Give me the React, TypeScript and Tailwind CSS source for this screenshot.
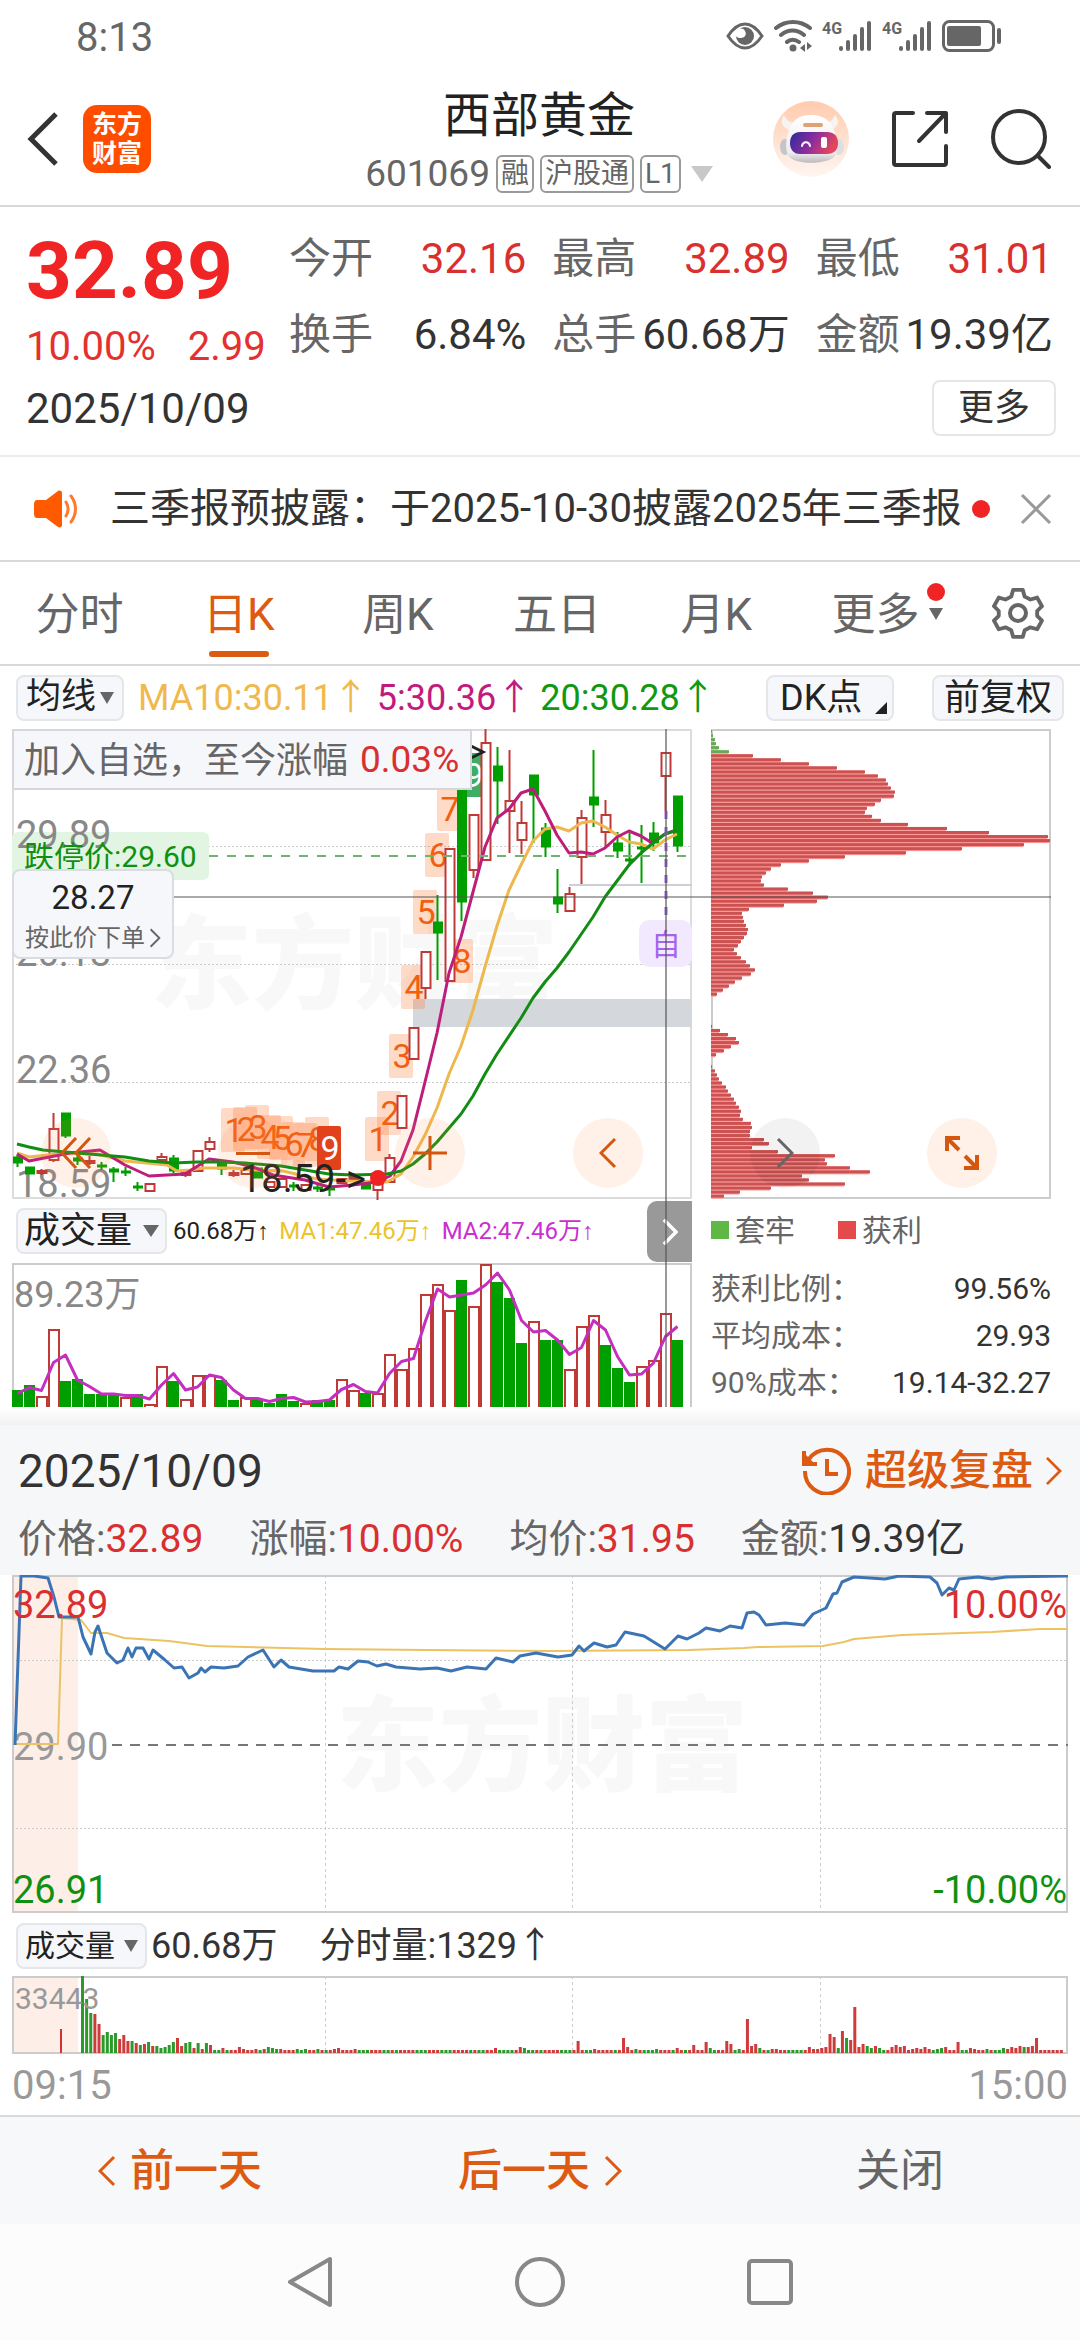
import React, { useState } from "react";

const RED = "#d92f2f";
const GREEN = "#009f00";

interface Candle {
  up: boolean;
  top: number;
  bottom: number;
  high?: number;
  low?: number;
}

// [up, body top, body bottom, high, low] in chart units
const candleRows: [number, number, number, number?, number?][] = [
  [0, 428, 434, 426, 438],
  [0, 438, 445],
  [1, 442, 444, 440, 446],
  [1, 400, 431, 384, 433],
  [0, 384, 407, 384, 409],
  [0, 429, 432, 424, 436],
  [1, 432, 434, 427, 436],
  [0, 436, 438, 433, 441],
  [0, 440, 443, 438, 453],
  [0, 442, 444, 438, 447],
  [0, 457, 459, 453, 462],
  [1, 455, 462],
  [1, 428, 431, 424, 437],
  [0, 429, 442, 426, 444],
  [1, 444, 446, 440, 448],
  [1, 422, 442, 421, 443],
  [1, 413, 420, 408, 423],
  [0, 434, 440, 432, 446],
  [1, 444, 446, 441, 448],
  [1, 441, 445],
  [0, 439, 449],
  [1, 453, 458],
  [1, 450, 458],
  [0, 456, 458, 453, 462],
  [1, 456, 461],
  [0, 458, 460, 455, 463],
  [0, 459, 461, 457, 467],
  [1, 450, 454],
  [1, 448, 450, 444, 453],
  [0, 452, 460],
  [1, 454, 461, 450, 471],
  [1, 429, 453, 425, 453],
  [1, 367, 399],
  [1, 299, 330],
  [1, 223, 259, 223, 270],
  [0, 193, 204, 166, 251],
  [1, 120, 252],
  [0, 40, 173, 40, 192],
  [1, 86, 141, 86, 149],
  [1, 14, 131, 0, 132],
  [0, 37, 52, 18, 95],
  [1, 72, 82, 21, 124],
  [1, 94, 111, 72, 125],
  [0, 46, 66, 46, 114],
  [0, 99, 118, 94, 128],
  [0, 168, 175, 140, 184],
  [1, 165, 182, 158, 182],
  [1, 89, 128, 81, 155],
  [0, 68, 76, 21, 98],
  [1, 86, 103, 71, 119],
  [0, 114, 122, 103, 129],
  [0, 130, 132, 104, 137],
  [0, 118, 120, 96, 154],
  [0, 104, 114, 93, 122],
  [1, 24, 47, 24, 82],
  [0, 67, 117, 67, 123],
];

const candles: Candle[] = candleRows.map(([up, top, bottom, high, low]) => ({
  up: up === 1,
  top,
  bottom,
  high,
  low,
}));

const volumes = [
  17, 22, 11, 78, 26, 28, 13, 13, 13, 10, 13, 3, 41, 26, 8, 32, 32, 27, 7, 10,
  7, 4, 13, 6, 4, 7, 7, 28, 17, 14, 14, 53, 38, 59, 113, 123, 97, 127, 101, 143,
  125, 109, 64, 86, 67, 67, 38, 81, 92, 62, 39, 25, 41, 47, 94, 67,
];

const volumeUp = [2, 3, 9, 11, 12, 14, 15, 16, 19, 24, 27, 28, 30, 31, 32, 33, 34, 35, 36, 38, 39, 43, 46, 47, 48, 52, 53, 54];

const ma20 =
  "5,415 17,418 31,421 65,424 113,428 137,432 161,434 185,433 209,433 233,434 269,437 293,441 317,445 341,446 375,445 389,442 401,435 413,425 425,413 437,399 449,385 461,367 473,345 485,325 509,289 521,269 533,253 545,239 557,223 581,188 593,168 605,152 617,136 629,124 641,114 653,105 665,101";
const ma10 =
  "5,424 17,428 55,424 85,425 113,432 155,436 165,442 178,441 191,439 221,439 241,441 271,442 305,450 338,452 375,453 389,445 401,428 413,406 425,379 437,345 449,317 461,281 473,238 485,197 497,161 509,136 521,112 533,100 545,98 557,102 569,94 581,92 593,98 605,106 617,113 629,115 641,120 653,111 665,105";
const ma5 =
  "5,425 17,432 58,424 88,421 113,436 137,447 173,445 197,430 221,433 241,438 261,446 293,451 317,458 341,456 365,453 378,447 389,432 401,401 413,353 425,304 437,244 449,208 461,163 473,118 485,89 497,80 509,64 521,60 533,82 545,106 557,124 569,123 581,125 593,119 605,108 617,102 629,107 640,114 653,105 665,101";

const countdown = [
  { n: "1", x: 209, y: 379 },
  { n: "2", x: 221, y: 378 },
  { n: "3", x: 233, y: 376 },
  { n: "4", x: 245, y: 386 },
  { n: "5", x: 257, y: 387 },
  { n: "6", x: 269, y: 393 },
  { n: "7", x: 281, y: 394 },
  { n: "8", x: 293, y: 388 },
  { n: "9", x: 305, y: 397, fill: "#e2421b" },
  { n: "1", x: 353, y: 388 },
  { n: "2", x: 365, y: 362 },
  { n: "3", x: 377, y: 305 },
  { n: "4", x: 389, y: 236 },
  { n: "5", x: 401, y: 161 },
  { n: "6", x: 413, y: 104 },
  { n: "7", x: 425, y: 58 },
  { n: "8", x: 437, y: 210 },
  { n: "9", x: 449, y: 24, fill: "#3fae64" },
];

const chips = [
  1, 2, 4, 5, 8, 18, 42, 70, 98, 126, 154, 167, 175, 177, 180, 184, 183, 170,
  164, 156, 154, 161, 170, 197, 236, 278, 337, 339, 313, 251, 195, 134, 98, 70,
  60, 55, 51, 50, 53, 77, 102, 117, 106, 73, 38, 31, 32, 33, 35, 37, 36, 33, 30,
  27, 23, 26, 30, 35, 39, 44, 40, 31, 24, 18, 12, 6, 0, 0, 0, 0, 0, 0, 0, 1, 9,
  17, 25, 28, 20, 13, 5, 0, 0, 1, 4, 6, 8, 11, 15, 17, 20, 23, 25, 28, 30, 29,
  32, 40, 41, 39, 39, 53, 58, 41, 67, 124, 114, 116, 139, 159, 91, 98, 134, 60,
  29, 13,
];

const pricePath =
  "3,170 9,1 22,1 36,3 42,22 47,42 66,42 71,62 79,79 83,57 86,51 95,78 105,88 111,85 116,73 120,82 124,73 131,73 137,84 141,75 153,85 162,93 170,92 177,103 186,98 189,93 193,97 199,92 212,93 226,91 236,82 251,75 262,92 269,85 277,92 301,96 322,96 327,92 336,94 346,86 356,87 365,91 374,89 384,92 408,94 425,93 439,96 455,92 474,94 484,83 501,87 508,81 524,78 546,82 560,80 567,71 572,76 582,68 595,72 604,70 613,57 632,61 653,74 666,61 675,64 687,58 694,53 708,56 718,51 730,53 735,38 742,37 747,40 754,50 773,48 792,50 801,39 814,33 821,19 825,18 830,7 842,2 873,4 887,1 918,2 925,8 930,20 937,13 942,15 947,4 966,2 980,4 994,2 1056,1";
const avgPath =
  "3,169 46,169 50,43 69,45 79,58 95,58 112,63 157,66 195,71 312,74 415,75 539,76 677,75 732,73 746,72 811,71 832,67 842,64 890,60 980,57 1028,54 1056,54";

// minute volumes, negative = falling minute
const opening = [
  -77, -54, -40, 39, 29, -18, -21, -18, -20, 14, 18, 12, -12, 10, -8, 9, -11, 7,
  -7, -5, -6, -8, -11, 15, 7, -10, -11, 5, -10, 4, -10, 8, -3, -3, 5, -3, 3, 3,
  6, 4, 3, 3, 4, -3, 4, -6, -5, -4, 4, 3,
];
const spikes: Record<number, number> = {
  52: -4, 54: -4, 57: -4, 61: 4, 62: 5, 66: 4, 100: 5, 106: 6, 107: -5, 120: 12,
  124: 4, 131: 15, 132: 6, 134: -4, 139: -4, 144: 5, 148: 8, 151: 11, 152: -5,
  156: 12, 157: 9, 159: -4, 161: 34, 162: 7, 163: 9, 164: -5, 167: 4, 168: 4,
  176: 6, 177: 4, 178: 4, 179: 5, 180: 6, 181: 19, 182: 16, 183: -5, 184: 22,
  185: -15, 186: 13, 187: 46, 188: 6, 189: 9, 190: -7, 191: -5, 192: 7, 193: -5,
  196: 6, 197: 8, 198: 6, 199: 7, 201: 4, 202: 5, 203: 4, 204: 6, 205: 4,
  207: -4, 208: -5, 209: 6, 212: 11, 215: 5, 216: 4, 219: -4, 223: -5, 224: 4,
  225: 6, 226: 5, 227: 7, 228: -6, 229: 6, 230: 7, 231: 15,
};
const minutes = Array.from({ length: 238 }, (_, i) => {
  if (i < opening.length) return opening[i];
  if (spikes[i]) return spikes[i];
  return i > 228 || i % 5 === 0 || i % 7 < 3 ? 3 : -3;
});

const quotes = [
  { label: "今开", value: "32.16", red: true },
  { label: "最高", value: "32.89", red: true },
  { label: "最低", value: "31.01", red: true },
  { label: "换手", value: "6.84%" },
  { label: "总手", value: "60.68万" },
  { label: "金额", value: "19.39亿" },
];

const tabs = ["分时", "日K", "周K", "五日", "月K"];

const Chevron = ({
  dir,
  className,
  width = 3,
}: {
  dir: "left" | "right";
  className?: string;
  width?: number;
}) => (
  <svg viewBox="0 0 18 32" className={className} fill="none" stroke="currentColor" strokeWidth={width}>
    <path d={dir === "left" ? "M16 2 2 16l14 14" : "M2 2l14 14L2 30"} />
  </svg>
);

const Caret = ({ className = "h-3 w-4" }: { className?: string }) => (
  <svg viewBox="0 0 16 12" className={className} fill="#666" preserveAspectRatio="none">
    <path d="M0 0h16L8 12z" />
  </svg>
);

const Signal = () => (
  <svg viewBox="0 0 50 32" className="h-8 w-[50px]">
    <text x="0" y="14" fontSize="16" fontWeight="700" fill="#666">
      4G
    </text>
    <g stroke="#666" strokeWidth="4" strokeLinecap="round">
      <path d="M19 28v1M26 22v7M33 16v13M40 9v20M47 3v26" />
    </g>
  </svg>
);

const StatusBar = () => (
  <div className="flex h-[72px] items-center justify-between pr-[78px] pl-[76px] text-[#666]">
    <span className="pt-1 text-[40px] leading-none">8:13</span>
    <div className="flex items-center gap-[10px]">
      <svg viewBox="0 0 38 28" className="h-7 w-[38px]" fill="none">
        <path d="M2 14C8 5 13 2 19 2s11 3 17 12C30 23 25 26 19 26S8 23 2 14z" stroke="#666" strokeWidth="3" />
        <circle cx="19" cy="14" r="9" fill="#666" />
        <path d="M11 8c3-2 6-2 8 1s0 7-4 7-6-2-6-4z" fill="#fff" />
      </svg>
      <svg viewBox="0 0 38 32" className="h-8 w-[38px]" fill="none" stroke="#666" strokeWidth="4" strokeLinecap="round">
        <path d="M2 8c10-8 24-8 34 0M7 15c7-6 16-6 23 0M13 22c3-3 8-3 12 0" />
        <circle cx="19" cy="28" r="3.5" fill="#666" stroke="none" />
        <path d="M31 24v8l-5-4zM33 22v8l5-4z" fill="#666" stroke="none" />
      </svg>
      <Signal />
      <Signal />
      <svg viewBox="0 0 60 32" className="h-8 w-[60px]" fill="none">
        <rect x="1.5" y="1.5" width="50" height="29" rx="6" stroke="#666" strokeWidth="3" />
        <rect x="5" y="6" width="34" height="20" rx="2" fill="#666" />
        <rect x="55" y="8" width="4" height="16" rx="2" fill="#666" />
      </svg>
    </div>
  </div>
);

const Robot = () => (
  <svg viewBox="0 0 76 76" className="h-[76px] w-[76px]">
    <defs>
      <linearGradient id="robotBg" x1="0" y1="0" x2="0" y2="1">
        <stop offset="0" stopColor="#ffcbae" />
        <stop offset="1" stopColor="#fff6f1" />
      </linearGradient>
      <linearGradient id="robotFace" x1="0" y1="0" x2="1" y2="0.3">
        <stop offset="0" stopColor="#2b2b9b" />
        <stop offset="0.55" stopColor="#8d2d9e" />
        <stop offset="1" stopColor="#e2465c" />
      </linearGradient>
      <linearGradient id="robotHead" x1="0" y1="0" x2="0" y2="1">
        <stop offset="0" stopColor="#ffffff" />
        <stop offset="0.8" stopColor="#ececee" />
        <stop offset="1" stopColor="#b9b9bf" />
      </linearGradient>
    </defs>
    <circle cx="38" cy="38" r="38" fill="url(#robotBg)" />
    <path d="M11 14c-4 6-3 12 6 15l6-7c-6 0-10-3-12-8zM62 14c5 6 4 12-5 15l-6-7c6 0 9-3 11-8z" fill="#f7f3f1" />
    <ellipse cx="12" cy="46" rx="5" ry="8" fill="#c4c4c9" />
    <ellipse cx="66" cy="46" rx="5" ry="8" fill="#dedee2" />
    <path d="M38 14c14 0 21 7 24 18 3 13 4 22-4 26-10 5-30 5-39 0-7-4-7-15-4-26 3-11 9-18 23-18z" fill="url(#robotHead)" />
    <rect x="30" y="22" width="20" height="4" rx="2" fill="#e0a173" />
    <path d="M27 31h27c8 0 11 5 11 11 0 7-4 11-11 11H27c-7 0-10-5-10-11s3-11 10-11z" fill="url(#robotFace)" />
    <path d="M29 45c1-5 7-5 8 0" fill="none" stroke="#fff" strokeWidth="2" strokeLinecap="round" />
    <rect x="48" y="36" width="6" height="11" rx="2" fill="#fff" />
  </svg>
);

const Header = () => (
  <header className="grid h-[135px] grid-cols-[1fr_auto_1fr] items-center border-b-2 border-[#d9d9d9] pr-[29px] pl-[27px]">
    <div className="flex items-center gap-6">
      <button type="button" aria-label="返回">
        <svg viewBox="0 0 32 56" className="h-14 w-8" fill="none" stroke="#333" strokeWidth="5">
          <path d="M29 3 4 28l25 25" />
        </svg>
      </button>
      <button
        type="button"
        className="h-[68px] w-[68px] rounded-[14px] bg-[#ff4d00] text-[25px] leading-[29px] font-bold text-white"
      >
        东方
        <br />
        财富
      </button>
    </div>
    <div className="flex flex-col items-center pt-2">
      <h1 className="text-[48px] leading-[62px] text-[#222]">西部黄金</h1>
      <div className="flex h-[54px] items-center gap-[6px] text-[28px] text-[#666]">
        <span className="text-[37px]">601069</span>
        {["融", "沪股通", "L1"].map((tag) => (
          <span key={tag} className="rounded-md border-2 border-[#999] px-[3px] leading-[34px]">
            {tag}
          </span>
        ))}
        <svg viewBox="0 0 22 16" className="ml-1 h-4 w-[22px]" fill="#c8c8c8">
          <path d="M0 0h22L11 16z" />
        </svg>
      </div>
    </div>
    <div className="flex items-center justify-end gap-[42px]">
      <button type="button" aria-label="助手">
        <Robot />
      </button>
      <button type="button" aria-label="分享">
        <svg viewBox="0 0 58 58" className="h-[58px] w-[58px]" fill="none" stroke="#333" strokeWidth="4" strokeLinecap="round" strokeLinejoin="round">
          <path d="M22 3H5a2 2 0 0 0-2 2v48a2 2 0 0 0 2 2h48a2 2 0 0 0 2-2V36M36 3h19v19M54 4 28 31" />
        </svg>
      </button>
      <button type="button" aria-label="搜索">
        <svg viewBox="0 0 60 60" className="h-[60px] w-[60px]" fill="none" stroke="#333" strokeWidth="4" strokeLinecap="round">
          <circle cx="28" cy="28" r="26" />
          <path d="m47 47 11 11" />
        </svg>
      </button>
    </div>
  </header>
);

const Quote = () => (
  <section className="border-b-2 border-[#ececec] pt-[14px] pr-6 pb-3 pl-[26px]">
    <div className="flex">
      <div className="w-[263px] text-[#e53030]">
        <p className="text-[80px] leading-[100px] font-bold text-[#f02424]">32.89</p>
        <p className="flex gap-8 text-[40px] leading-[52px]">
          <span>10.00%</span>
          <span>2.99</span>
        </p>
      </div>
      <dl className="grid flex-1 grid-cols-3 gap-x-[26px] pr-[3px] text-[42px] leading-[76px]">
        {quotes.map((q) => (
          <div key={q.label} className="flex justify-between whitespace-nowrap">
            <dt className="text-[#666]">{q.label}</dt>
            <dd className={q.red ? "text-[#d92f2f]" : "text-[#333]"}>{q.value}</dd>
          </div>
        ))}
      </dl>
    </div>
    <div className="flex h-[70px] items-center justify-between">
      <span className="text-[42px] text-[#333]">2025/10/09</span>
      <button type="button" className="h-14 w-[124px] rounded-lg border-2 border-[#e6e6e6] text-[36px] leading-none text-[#333]">
        更多
      </button>
    </div>
  </section>
);

const Notice = () => (
  <section className="flex h-[105px] items-center border-b-2 border-[#d9d9d9] pr-7 pl-[34px]">
    <svg viewBox="0 0 44 38" className="h-[38px] w-11 shrink-0" fill="#ff5a00">
      <path d="M3 10h9L24 1c2-1 4 0 4 2v32c0 2-2 3-4 2l-12-9H3c-2 0-3-2-3-4V14c0-2 1-4 3-4z" />
      <path d="M32 12c3 5 3 9 0 14M37 6c6 8 6 18 0 26" fill="none" stroke="#ff7a30" strokeWidth="3" strokeLinecap="round" />
    </svg>
    <p className="ml-8 text-[40px] whitespace-nowrap text-[#333]">三季报预披露：于2025-10-30披露2025年三季报</p>
    <span className="ml-[10px] h-[18px] w-[18px] shrink-0 rounded-full bg-[#f02424]" />
    <button type="button" aria-label="关闭提示" className="ml-auto">
      <svg viewBox="0 0 32 32" className="h-8 w-8" stroke="#999" strokeWidth="3">
        <path d="m2 2 28 28M30 2 2 30" />
      </svg>
    </button>
  </section>
);

const Tabs = () => {
  const [active, setActive] = useState("日K");

  return (
    <nav className="flex h-[104px] border-b-2 border-[#d9d9d9] text-[44px] text-[#666]">
      {tabs.map((tab) => (
        <button
          type="button"
          key={tab}
          onClick={() => setActive(tab)}
          className={
            active === tab
              ? "relative flex-1 pt-1 text-[#dd5a13] after:absolute after:bottom-[7px] after:left-1/2 after:h-[6px] after:w-[60px] after:-translate-x-1/2 after:rounded-full after:bg-[#dd5a13]"
              : "relative flex-1 pt-1"
          }
        >
          {tab}
        </button>
      ))}
      <button type="button" className="relative flex-1 pt-1">
        更多
        <span className="absolute top-[21px] right-[10px] h-[18px] w-[18px] rounded-full bg-[#f02424]" />
        <span className="absolute top-[46px] right-3">
          <Caret className="h-3 w-[14px]" />
        </span>
      </button>
      <button type="button" aria-label="设置" className="flex w-[125px] items-center justify-center">
        <svg viewBox="0 0 52 54" className="h-[54px] w-[52px]" fill="none" stroke="#666" strokeWidth="4" strokeLinejoin="round">
          <path d="M21 3h10l2 7 6 3 7-2 5 9-5 5v5l5 5-5 9-7-2-6 3-2 7H21l-2-7-6-3-7 2-5-9 5-5v-5l-5-5 5-9 7 2 6-3z" transform="translate(1 1) scale(.96)" />
          <circle cx="26" cy="27" r="8" />
        </svg>
      </button>
    </nav>
  );
};

const Up = () => <span className="inline-block w-9 text-center">↑</span>;

const toolButton = "flex h-[46px] items-center rounded-lg border-2 border-[#e4e6ea] bg-[#f6f7fa] text-[#222]";

const IndicatorRow = () => (
  <div className="flex h-[63px] items-center pr-4 pl-4 text-[36px] whitespace-nowrap">
    <button type="button" className={`${toolButton} w-[108px] gap-1 pl-2 text-[35px]`}>
      均线
      <Caret className="h-3 w-[14px]" />
    </button>
    <span className="ml-[14px] text-[#f0b94d]">
      MA10:30.11
      <Up />
    </span>
    <span className="ml-2 text-[#c21b7d]">
      5:30.36
      <Up />
    </span>
    <span className="ml-2 text-[#109910]">
      20:30.28
      <Up />
    </span>
    <button type="button" className={`${toolButton} relative ml-auto w-32 pl-3`}>
      DK点
      <svg viewBox="0 0 12 12" className="absolute right-[5px] bottom-[5px] h-3 w-3" fill="#222">
        <path d="M12 0v12H0z" />
      </svg>
    </button>
    <button type="button" className={`${toolButton} ml-[38px] w-[132px] justify-center`}>
      前复权
    </button>
  </div>
);

const KLine = () => (
  <svg viewBox="0 0 680 470" className="block w-full overflow-visible" fontSize="38">
    <text x="138" y="272" fontSize="102" fontWeight="900" fill="#f8f8f8">
      东方财富
    </text>
    <g stroke="#ccc" strokeDasharray="2 2">
      <path d="M0 117.5H680M0 235.5H680M0 353.5H680" />
    </g>
    <rect x="1" y="1" width="678" height="468" fill="none" stroke="#dcdcdc" strokeWidth="2" />
    <rect x="401" y="270" width="279" height="28" fill="#d4d7dc" />
    <path d="M557 156H680" stroke="#ccd0d6" strokeWidth="2" />
    <rect x="0" y="103" width="197" height="48" rx="6" fill="#e2f5e2" />
    <g fill="#888">
      <text x="4" y="119">29.89</text>
      <text x="4" y="237">26.13</text>
      <text x="4" y="354">22.36</text>
      <text x="4" y="468">18.59</text>
    </g>
    {countdown.map((c, i) => (
      <g key={i}>
        <rect x={c.x} y={c.y} width="24" height="44" rx="2" fill={c.fill || "#ff6a20"} fillOpacity={c.fill ? 1 : 0.25} />
        <text x={c.x + 13} y={c.y + 34} fontSize="34" textAnchor="middle" fill={c.fill ? "#fff" : "#f06010"}>
          {c.n}
        </text>
      </g>
    ))}
    {candles.map((c, i) => {
      const x = 5.5 + i * 12;
      const color = c.up ? "#bf3a36" : GREEN;
      return (
        <g key={i} stroke={color} strokeWidth="2">
          {c.high !== undefined && <path d={`M${x} ${c.high}V${c.top}M${x} ${c.bottom}V${c.low}`} />}
          <rect x={x - 4} y={c.top} width="9" height={c.bottom - c.top} fill={c.up ? "#fff" : GREEN} strokeWidth={c.up ? 2 : 1} />
        </g>
      );
    })}
    <g fill="none" strokeWidth="3" strokeLinejoin="round">
      <polyline points={ma10} stroke="#edb94f" />
      <polyline points={ma5} stroke="#bd1e7c" />
      <polyline points={ma20} stroke="#138c13" />
    </g>
    <path d="M197 127H680" stroke="#6fb36f" strokeWidth="2" strokeDasharray="9 9" />
    <text x="12" y="138" fontSize="30" fill="#109010">
      跌停价:29.60
    </text>
    <text x="228" y="463" fill="#222">
      18.59-&gt;
    </text>
    <circle cx="366" cy="449" r="8" fill="#ee2222" />
    <path d="M459 17l12 6-12 6" fill="none" stroke="#222" strokeWidth="3" />
    <rect x="1" y="1" width="458" height="59" fill="#f6f7fa" stroke="#d5d7dc" strokeWidth="2" />
    <text x="12" y="44" fontSize="36" fill="#666">
      加入自选，至今涨幅
    </text>
    <text x="348" y="43" fontSize="37" fill={RED}>
      0.03%
    </text>
    <path d="M654 82V190" stroke="#9a63dd" strokeWidth="3" strokeDasharray="8 8" />
    <rect x="627" y="191" width="53" height="47" rx="10" fill="#f3e9fe" />
    <text x="654" y="226" fontSize="30" textAnchor="middle" fill="#a465ee">
      自
    </text>
  </svg>
);

const DayVolume = () => (
  <svg viewBox="0 0 680 144" className="block w-full">
    <path d="M1 144V1H679V144" fill="none" stroke="#ccc" strokeWidth="2" />
    {volumes.map((h, i) => {
      const x = i * 12;
      return volumeUp.includes(i) ? (
        <path key={i} d={`M${x + 1} 144V${145 - h}h10V144`} fill="#fff" stroke="#bf3a36" strokeWidth="2" />
      ) : (
        <rect key={i} x={x} y={144 - h} width="11" height={h} fill={GREEN} />
      );
    })}
    <polyline
      points={volumes.map((h, i) => `${5.5 + i * 12},${144 - (h + (volumes[i - 1] ?? 10)) / 2}`).join(" ")}
      fill="none"
      stroke="#c42fc0"
      strokeWidth="3"
      strokeLinejoin="round"
    />
    <text x="2" y="44" fontSize="36" fill="#888">
      89.23万
    </text>
  </svg>
);

const Chips = () => (
  <svg viewBox="0 0 340 470" className="block w-full">
    <rect x="1" y="1" width="338" height="468" fill="none" stroke="#ccc" strokeWidth="2" />
    {chips.map((w, i) => (
      <g key={i}>
        <rect x="0" y={1 + i * 4.04} width={Math.max(w - 1, 0)} height="4" fill={i < 6 ? "#b4e6a4" : "#ff9c9c"} />
        <rect x="0" y={1 + i * 4.04} width={w} height="3" fill={i < 6 ? "#68a858" : "#cc5151"} />
      </g>
    ))}
  </svg>
);

const roundButton = "flex h-[70px] w-[70px] items-center justify-center rounded-full bg-[#ff8040]/12 text-[#d4560f]";

const ChartTools = () => (
  <div className="absolute top-[389px] right-[83px] left-[41px] z-20 flex justify-between">
    <button type="button" aria-label="最左" className={roundButton}>
      <svg viewBox="0 0 32 32" className="h-8 w-8" fill="none" stroke="currentColor" strokeWidth="3">
        <path d="M16 1 2 16l14 15M30 1 16 16l14 15" />
      </svg>
    </button>
    <button type="button" aria-label="缩小" className={roundButton}>
      <span className="h-[3px] w-[34px] bg-[#d4560f]" />
    </button>
    <button type="button" aria-label="放大" className={roundButton}>
      <svg viewBox="0 0 34 34" className="h-[34px] w-[34px]" stroke="currentColor" strokeWidth="3">
        <path d="M17 0v34M0 17h34" />
      </svg>
    </button>
    <button type="button" aria-label="左移" className={roundButton}>
      <Chevron dir="left" className="h-8 w-[18px]" />
    </button>
    <button type="button" aria-label="右移" className="flex h-[70px] w-[70px] items-center justify-center rounded-full bg-black/5 text-[#666]">
      <Chevron dir="right" className="h-8 w-[18px]" />
    </button>
    <button type="button" aria-label="全屏" className={roundButton}>
      <svg viewBox="0 0 34 34" className="h-[34px] w-[34px]" fill="none" stroke="currentColor" strokeWidth="4">
        <path d="M2 15V2h13M2 2l12 12M32 19v13H19M32 32 20 20" />
      </svg>
    </button>
  </div>
);

const stats = [
  ["获利比例：", "99.56%"],
  ["平均成本：", "29.93"],
  ["90%成本：", "19.14-32.27"],
];

const DayCharts = () => (
  <section className="relative grid grid-cols-[2fr_1fr] gap-x-[19px] pr-[29px] pl-3">
    <div className="relative">
      <KLine />
      <div className="relative flex h-16 items-center text-[24px] whitespace-nowrap">
        <button type="button" className={`${toolButton} ml-1 w-[151px] justify-between px-[6px] text-[36px]`}>
          成交量
          <Caret />
        </button>
        <span className="ml-[6px] text-[#222]">
          60.68万<span className="font-['Liberation_Sans']">↑</span>
        </span>
        <span className="ml-[10px] text-[#ecc32d]">
          MA1:47.46万<span className="font-['Liberation_Sans']">↑</span>
        </span>
        <span className="ml-[10px] text-[#c92fd0]">
          MA2:47.46万<span className="font-['Liberation_Sans']">↑</span>
        </span>
        <button
          type="button"
          aria-label="收起筹码"
          className="absolute top-[2px] right-0 flex h-[61px] w-[45px] items-center justify-center rounded-l-[10px] bg-[#999] text-white"
        >
          <Chevron dir="right" width={4} className="h-7 w-4" />
        </button>
      </div>
      <DayVolume />
      <div className="absolute inset-y-0 left-[96%] z-10 w-[2px] bg-[#555]/60" />
    </div>
    <div>
      <Chips />
      <div className="flex h-[62px] items-center text-[30px] text-[#666]">
        <span className="mr-[6px] h-[18px] w-[18px] bg-[#5fb845]" />
        套牢
        <span className="mr-[6px] ml-[43px] h-[18px] w-[18px] bg-[#e54a4a]" />
        获利
      </div>
      <dl className="pt-1 text-[30px] leading-[47px]">
        {stats.map(([label, value]) => (
          <div key={label} className="flex justify-between whitespace-nowrap">
            <dt className="text-[#666]">{label}</dt>
            <dd className="text-[#333]">{value}</dd>
          </div>
        ))}
      </dl>
    </div>
    <div className="absolute top-[167px] right-[29px] left-3 z-10 h-[2px] bg-[#555]/50" />
    <button
      type="button"
      className="absolute top-[140px] left-3 z-20 flex h-[90px] w-[162px] flex-col items-center rounded-lg border-2 border-[#d9dce0] bg-[#f6f7fa]"
    >
      <span className="pt-1 text-[33px] leading-[46px] text-[#222]">28.27</span>
      <span className="flex items-center gap-1 text-[24px] leading-[34px] text-[#666]">
        按此价下单
        <Chevron dir="right" className="h-5 w-3" />
      </span>
    </button>
    <ChartTools />
  </section>
);

const MinuteHeader = () => (
  <section className="h-[150px] bg-[#f6f7f9] px-[18px] whitespace-nowrap">
    <div className="flex h-[92px] items-center justify-between">
      <span className="text-[46px] text-[#333]">2025/10/09</span>
      <button type="button" className="flex items-center text-[42px] leading-none font-medium text-[#dd5a13]">
        <svg viewBox="0 0 50 48" className="mr-[14px] h-12 w-[50px]" fill="none" stroke="currentColor" strokeWidth="4">
          <path d="M8 12A22 22 0 1 1 4 24M26 12v15h11" />
          <path d="M3 4v13h13" />
          <path d="M3 6v11h11z" fill="currentColor" stroke="none" />
        </svg>
        超级复盘
        <Chevron dir="right" className="ml-[12px] h-[30px] w-[17px]" />
      </button>
    </div>
    <div className="flex gap-[46px] text-[39px] leading-[44px] text-[#666]">
      <span>
        价格:<b className="font-normal text-[#d92f2f]">32.89</b>
      </span>
      <span>
        涨幅:<b className="font-normal text-[#d92f2f]">10.00%</b>
      </span>
      <span>
        均价:<b className="font-normal text-[#d92f2f]">31.95</b>
      </span>
      <span>
        金额:<b className="font-normal text-[#333]">19.39亿</b>
      </span>
    </div>
  </section>
);

const MinuteCharts = () => (
  <section className="px-3">
    <svg viewBox="0 0 1056 338" className="block w-full" fontSize="38">
      <text x="324" y="208" fontSize="103" fontWeight="900" fill="#f8f8f8">
        东方财富
      </text>
      <rect x="0" y="0" width="66" height="338" fill="#fdeee8" />
      <g stroke="#ccc" strokeDasharray="3 3">
        <path d="M313.5 0V338M560.5 0V338M808.5 0V338" />
        <path d="M0 85.5H1056M0 253.5H1056" strokeDasharray="2 2" />
      </g>
      <rect x="1" y="1" width="1054" height="336" fill="none" stroke="#ccc" strokeWidth="2" />
      <path d="M100 170H1056" stroke="#777" strokeWidth="2" strokeDasharray="10 8" />
      <text x="1" y="185" fill="#999">
        29.90
      </text>
      <g fill="none" strokeLinejoin="round">
        <polyline points={avgPath} stroke="#edc263" strokeWidth="2" />
        <polyline points={pricePath} stroke="#3b74b4" strokeWidth="3" />
      </g>
      <text x="1" y="43" fill={RED}>
        32.89
      </text>
      <text x="1" y="328" fill="#109010">
        26.91
      </text>
      <g textAnchor="end">
        <text x="1055" y="43" fill={RED}>
          10.00%
        </text>
        <text x="1055" y="328" fill="#109010">
          -10.00%
        </text>
      </g>
    </svg>
    <div className="flex h-[63px] items-center pt-[2px] text-[36px] text-[#333]">
      <button type="button" className={`${toolButton} ml-1 w-[131px] justify-between px-[7px] text-[30px]`}>
        成交量
        <Caret className="h-3 w-[14px]" />
      </button>
      <span className="ml-1">60.68万</span>
      <span className="ml-[42px]">
        分时量:1329
        <Up />
      </span>
    </div>
    <svg viewBox="0 0 1056 78" className="block w-full">
      <rect x="0" y="0" width="66" height="78" fill="#fdeee8" />
      <path d="M313.5 0V78M560.5 0V78M808.5 0V78" stroke="#ccc" strokeDasharray="3 3" />
      <rect x="1" y="1" width="1054" height="76" fill="none" stroke="#ccc" strokeWidth="2" />
      <rect x="48" y="53" width="2" height="24" fill={RED} />
      {minutes.map((v, i) => (
        <rect key={i} x={69 + i * 4.13} y={77 - Math.abs(v)} width="3" height={Math.abs(v)} fill={v > 0 ? "#cf3b3b" : "#2a9a2a"} />
      ))}
      <text x="3" y="33" fontSize="30" fill="#999">
        33443
      </text>
    </svg>
    <div className="flex h-[61px] items-center justify-between pt-[2px] text-[40px] text-[#999]">
      <span>09:15</span>
      <span>15:00</span>
    </div>
  </section>
);

const BottomBar = () => (
  <div className="grid h-[109px] grid-cols-3 border-t-2 border-[#d9dadc] bg-[#f7f8fa] text-[44px] font-medium text-[#dd5a13]">
    <button type="button" className="flex items-center justify-center gap-[14px]">
      <Chevron dir="left" className="h-8 w-[18px]" />
      前一天
    </button>
    <button type="button" className="flex items-center justify-center gap-[14px]">
      后一天
      <Chevron dir="right" className="h-8 w-[18px]" />
    </button>
    <button type="button" className="font-normal text-[#666]">
      关闭
    </button>
  </div>
);

const SystemNav = () => (
  <div className="flex h-[116px] items-center justify-center gap-[180px] bg-[#fcfcfc]">
    <button type="button" aria-label="系统返回">
      <svg viewBox="0 0 50 52" className="h-[52px] w-[50px]" fill="none" stroke="#888" strokeWidth="4" strokeLinejoin="round">
        <path d="M45 3v46L5 26z" />
      </svg>
    </button>
    <button type="button" aria-label="主屏幕">
      <svg viewBox="0 0 50 50" className="h-[50px] w-[50px]" fill="none" stroke="#888" strokeWidth="4">
        <circle cx="25" cy="25" r="23" />
      </svg>
    </button>
    <button type="button" aria-label="最近任务">
      <svg viewBox="0 0 50 50" className="h-[50px] w-[50px]" fill="none" stroke="#888" strokeWidth="4">
        <rect x="4" y="4" width="42" height="42" rx="3" />
      </svg>
    </button>
  </div>
);

const App: React.FC = () => {
  return (
    <main className="bg-white font-['Roboto','Noto_Sans_CJK_SC',sans-serif]">
      <StatusBar />
      <Header />
      <Quote />
      <Notice />
      <Tabs />
      <IndicatorRow />
      <DayCharts />
      <div className="h-[18px] bg-linear-to-b from-white to-[#f1f1f1]" />
      <MinuteHeader />
      <MinuteCharts />
      <BottomBar />
      <SystemNav />
    </main>
  );
};

export default App;
